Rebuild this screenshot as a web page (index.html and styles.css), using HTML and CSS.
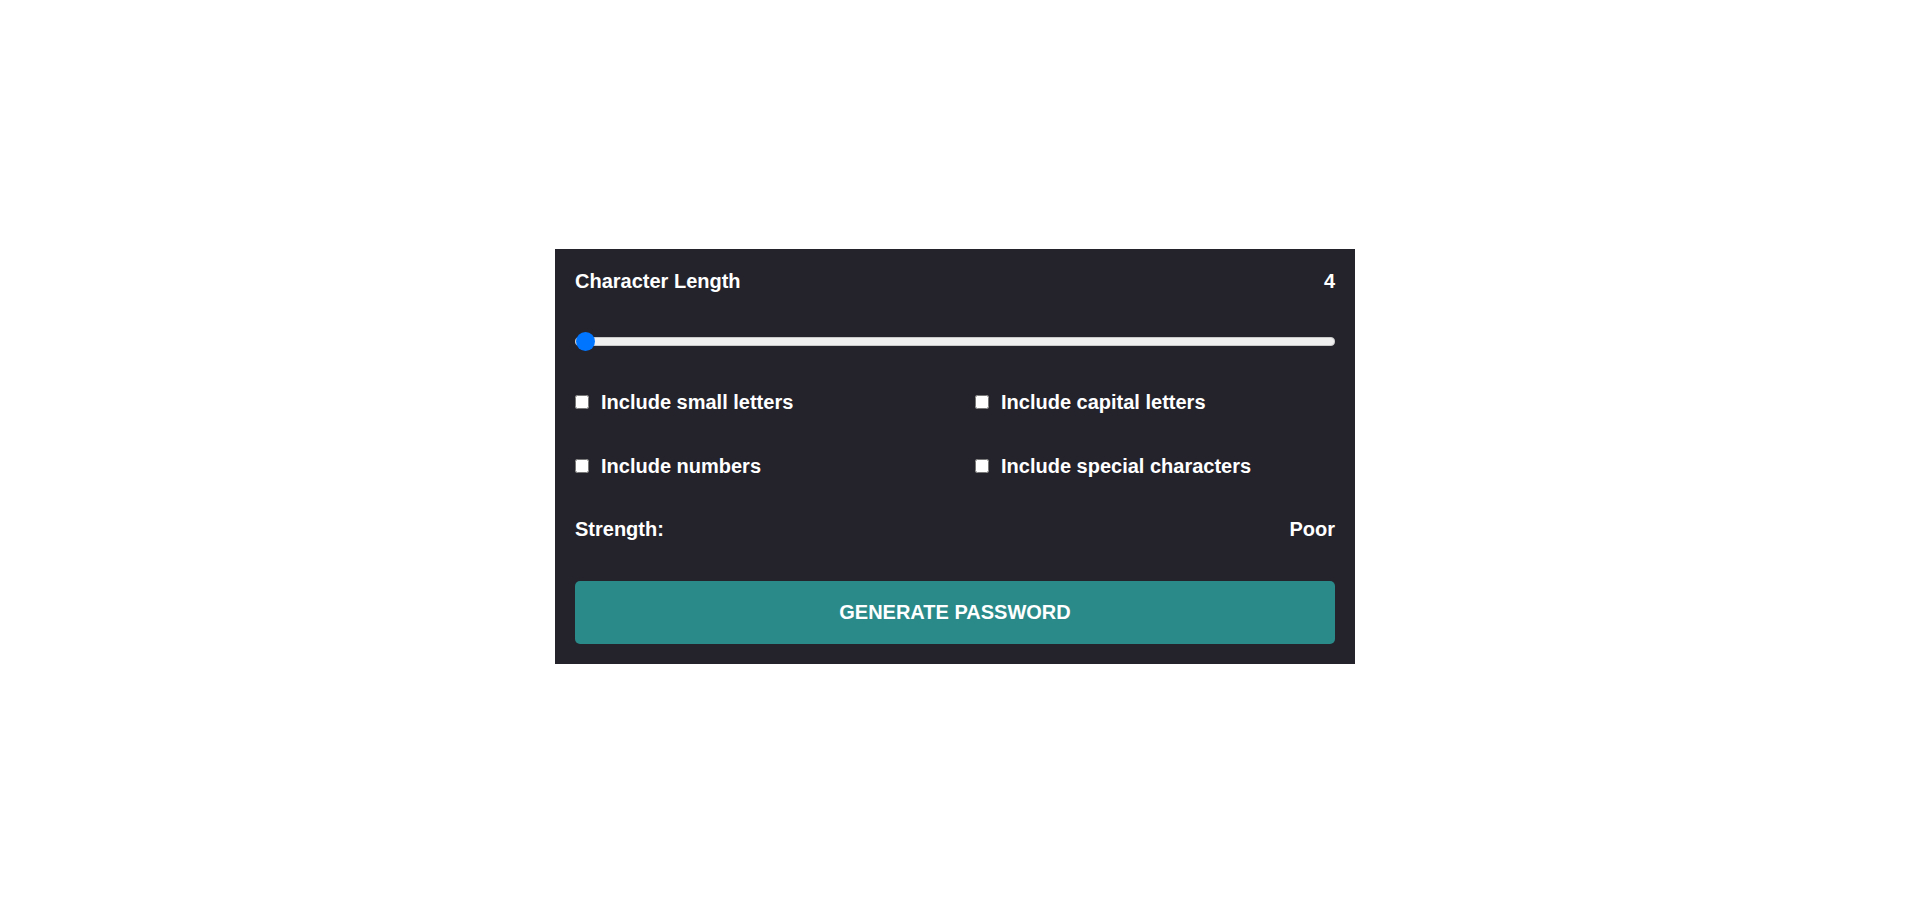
FILE: index.html
```html
<!DOCTYPE html>
<html lang="en">
<head>
<meta charset="UTF-8">
<title>Password Generator</title>
<link rel="stylesheet" href="styles.css">
</head>
<body>
<main class="page">
  <section class="card">
    <div class="row">
      <span class="label">Character Length</span>
      <span class="value">4</span>
    </div>
    <input class="slider" type="range" min="4" max="20" value="4">
    <div class="options">
      <label class="option"><input type="checkbox"><span>Include small letters</span></label>
      <label class="option"><input type="checkbox"><span>Include capital letters</span></label>
      <label class="option"><input type="checkbox"><span>Include numbers</span></label>
      <label class="option"><input type="checkbox"><span>Include special characters</span></label>
    </div>
    <div class="row">
      <span class="label">Strength:</span>
      <span class="value">Poor</span>
    </div>
    <button class="generate" type="button">Generate Password</button>
  </section>
</main>
</body>
</html>
```
FILE: styles.css
```css
html, body {
  margin: 0;
  padding: 0;
  background: #ffffff;
}

body {
  font-family: "Liberation Sans", Arial, sans-serif;
}

.page {
  box-sizing: border-box;
  min-height: 100vh;
  padding-top: 6px;
  display: flex;
  align-items: center;
  justify-content: center;
}

.card {
  box-sizing: border-box;
  width: 800px;
  padding: 20px;
  background: #24232c;
  color: #ffffff;
  display: flex;
  flex-direction: column;
  gap: 39.5px;
}

.row {
  display: flex;
  justify-content: space-between;
  align-items: center;
  font-size: 20px;
  font-weight: bold;
  line-height: 24px;
}

.slider {
  -webkit-appearance: none;
  appearance: none;
  display: block;
  margin: 0;
  width: 100%;
  height: 18px;
  background: transparent;
  cursor: pointer;
}

.slider::-webkit-slider-runnable-track {
  height: 9px;
  box-sizing: border-box;
  background: #efefef;
  border: 1px solid #c9c9c9;
  border-radius: 4px;
}

.slider::-webkit-slider-thumb {
  -webkit-appearance: none;
  appearance: none;
  width: 19px;
  height: 19px;
  margin-top: -6px;
  border-radius: 50%;
  background: #0075ff;
  border: none;
}

.options {
  display: grid;
  grid-template-columns: 1fr 1fr;
  column-gap: 40px;
  row-gap: 39.5px;
}

.option {
  display: flex;
  align-items: center;
  gap: 12px;
  font-size: 20px;
  font-weight: bold;
  line-height: 24px;
}

.option input {
  margin: 0;
  width: 14px;
  height: 14px;
}

.generate {
  display: block;
  width: 100%;
  height: 63px;
  border: none;
  border-radius: 5px;
  background: #2a8a89;
  color: #ffffff;
  font-family: "Liberation Sans", Arial, sans-serif;
  font-size: 20px;
  font-weight: bold;
  text-transform: uppercase;
  cursor: pointer;
}
```
